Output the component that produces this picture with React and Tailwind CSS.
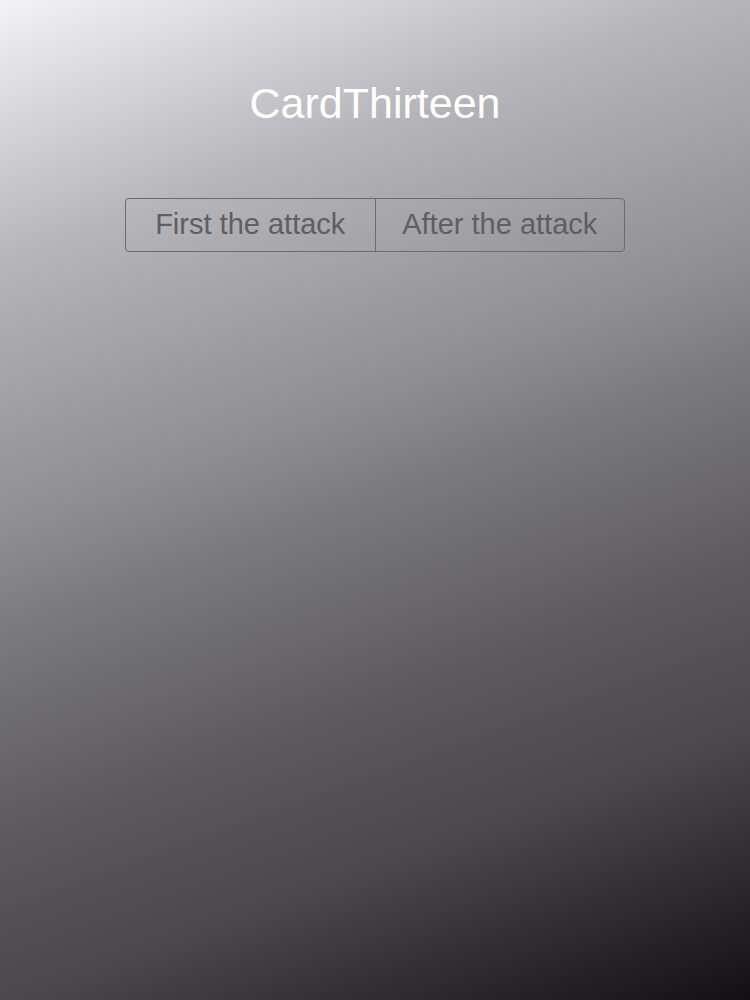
export default function App() {
  return (
    <div
      className="min-h-[1000px] w-full bg-[linear-gradient(160deg,#f3f2f6_0%,#b5b4b8_21%,#8e8d91_42%,#7a797d_50%,#5a585c_67%,#4a484c_79%,#121014_100%)] flex flex-col items-center"
      style={{ fontFamily: '"Liberation Sans", Arial, sans-serif' }}
    >
      <h1 className="mt-[76px] text-[43px] leading-[54px] text-white font-normal">
        CardThirteen
      </h1>

      <div className="mt-[68px] flex w-[500px] h-[54px] border border-[#6c6b6f] rounded-[4px]">
        <button className="flex-1 flex items-center justify-center text-[29px] text-[#5f5e62] border-r border-[#6c6b6f]">
          First the attack
        </button>
        <button className="flex-1 flex items-center justify-center text-[29px] text-[#5f5e62]">
          After the attack
        </button>
      </div>
    </div>
  );
}
